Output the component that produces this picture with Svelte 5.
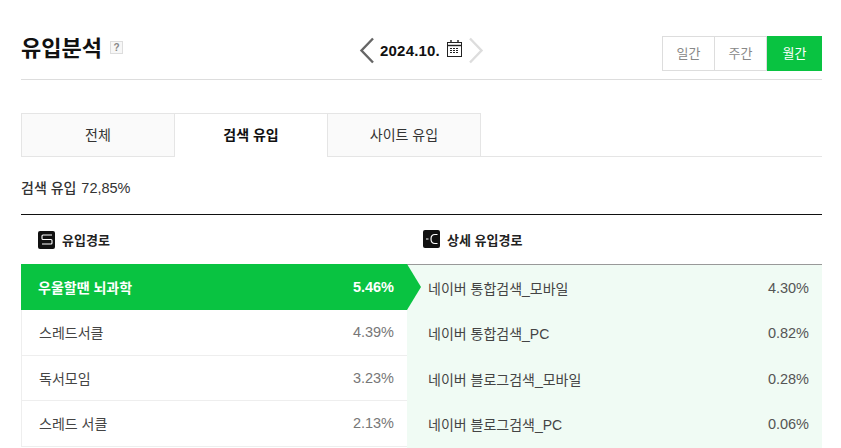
<script>
  const tabs = [
    { label: "전체" },
    { label: "검색 유입", active: true },
    { label: "사이트 유입" }
  ];
  const periods = [
    { label: "일간" },
    { label: "주간" },
    { label: "월간", active: true }
  ];
  const sources = [
    { name: "우울할땐 뇌과학", value: "5.46%", active: true },
    { name: "스레드서클", value: "4.39%" },
    { name: "독서모임", value: "3.23%" },
    { name: "스레드 서클", value: "2.13%" }
  ];
  const details = [
    { name: "네이버 통합검색_모바일", value: "4.30%" },
    { name: "네이버 통합검색_PC", value: "0.82%" },
    { name: "네이버 블로그검색_모바일", value: "0.28%" },
    { name: "네이버 블로그검색_PC", value: "0.06%" }
  ];
</script>

<div class="page">
  <header class="top">
    <div class="title">
      <h1>유입분석</h1>
      <span class="help">?</span>
    </div>
    <div class="date">
      <svg width="16" height="27" viewBox="0 0 16 27">
        <path d="M14 1.500 2.500 13.500 14 25.500" fill="none" stroke="#666" stroke-width="2.400" />
      </svg>
      <strong>2024.10.</strong>
      <svg class="cal" width="15" height="17" viewBox="0 0 15 17">
        <path d="M4 0v3M11 0v3" stroke="#222" stroke-width="1.400" />
        <rect x="0.500" y="2.500" width="14" height="14" fill="none" stroke="#222" />
        <path d="M1 5.500h13" stroke="#222" stroke-width="1.400" />
        <path d="M3 8.500h9M3 10.500h9M3 12.500h9" stroke="#222" stroke-width="1.200" stroke-dasharray="2 1" />
      </svg>
      <svg width="16" height="27" viewBox="0 0 16 27">
        <path d="M2 1.500 13.500 13.500 2 25.500" fill="none" stroke="#ddd" stroke-width="2.400" />
      </svg>
    </div>
    <div class="periods">
      {#each periods as p}
        <span class="period" class:on={p.active}>{p.label}</span>
      {/each}
    </div>
  </header>

  <nav class="tabs">
    {#each tabs as t}
      <span class="tab" class:on={t.active}>{t.label}</span>
    {/each}
  </nav>

  <p class="summary">검색 유입 <span>72,85%</span></p>

  <section class="table">
    <div class="col left">
      <div class="head">
        <span class="badge">
          <svg width="12" height="11" viewBox="0 0 12 11">
            <path d="M11 1H2Q1 1 1 2V4.500Q1 5.500 2 5.500H10Q11 5.500 11 6.500V9Q11 10 10 10H1" fill="none" stroke="#fff" stroke-width="1.100" />
          </svg>
        </span>
        유입경로
      </div>
      {#each sources as s}
        <div class="row" class:on={s.active}>
          <span>{s.name}</span>
          <span class="val">{s.value}</span>
        </div>
      {/each}
    </div>
    <div class="col right">
      <div class="head">
        <span class="badge">
          <svg width="14" height="12" viewBox="0 0 14 12">
            <path d="M12.500 1.500H10Q6 1.500 6 6T10 10.500H12.500M1 6H3.500" fill="none" stroke="#fff" stroke-width="1.200" />
          </svg>
        </span>
        상세 유입경로
      </div>
      <div class="panel">
        {#each details as d}
          <div class="row">
            <span>{d.name}</span>
            <span class="val">{d.value}</span>
          </div>
        {/each}
      </div>
    </div>
  </section>
</div>

<style>
  :global(body) {
    background: #fff;
    overflow: hidden;
  }
  .page, .page * {
    box-sizing: border-box;
  }
  .page {
    width: 801px;
    height: 448px;
    margin-left: 21px;
    overflow: hidden;
    font-family: "Liberation Sans", "Noto Sans CJK KR", sans-serif;
    color: #333;
  }
  .top {
    height: 80px;
    border-bottom: 1px solid #ddd;
    display: grid;
    grid-template-columns: 1fr auto 1fr;
    align-items: start;
  }
  .title {
    display: flex;
    align-items: center;
    gap: 8px;
    padding-top: 33px;
  }
  h1 {
    margin: 0;
    font-size: 22px;
    line-height: 32px;
    font-weight: 700;
    color: #111;
  }
  .help {
    width: 13px;
    height: 13px;
    border: 1px solid #ddd;
    background: #f7f7f7;
    color: #888;
    font-size: 10px;
    font-weight: 700;
    line-height: 11px;
    text-align: center;
    margin-bottom: 3px;
  }
  .date {
    display: flex;
    align-items: center;
    padding-top: 37px;
  }
  .date strong {
    font-size: 15px;
    letter-spacing: 0.2px;
    line-height: 27px;
    color: #111;
    margin: 0 7px 0 5px;
  }
  .cal {
    margin: 0 6px 4px 0;
  }
  .periods {
    display: flex;
    justify-content: flex-end;
    padding-top: 36px;
  }
  .period {
    width: 52px;
    height: 35px;
    border: 1px solid #ddd;
    border-left: 0;
    text-align: center;
    font-size: 13px;
    line-height: 33px;
    color: #888;
  }
  .period:first-child {
    width: 53px;
    border-left: 1px solid #ddd;
  }
  .period.on {
    width: 55px;
    border: 0;
    background: #09c341;
    color: #fff;
    line-height: 35px;
  }
  .tabs {
    display: flex;
    margin-top: 33px;
    height: 44px;
    border-bottom: 1px solid #e5e5e5;
  }
  .tab {
    width: 153px;
    height: 44px;
    border: 1px solid #e5e5e5;
    border-left: 0;
    background: #fafafa;
    text-align: center;
    font-size: 14px;
    line-height: 42px;
    color: #333;
  }
  .tab:first-child {
    width: 154px;
    border-left: 1px solid #e5e5e5;
  }
  .tab.on {
    border-bottom: 0;
    background: #fff;
    font-weight: 700;
    color: #111;
  }
  .summary {
    margin: 21px 0 0;
    font-size: 14px;
    font-weight: 500;
    line-height: 20px;
    color: #333;
  }
  .summary span {
    font-size: 14.500px;
    margin-left: 1px;
  }
  .table {
    margin-top: 16px;
    border-top: 1px solid #111;
    display: flex;
  }
  .col.left {
    width: 386px;
  }
  .col.right {
    width: 415px;
  }
  .head {
    height: 49px;
    display: flex;
    align-items: center;
    gap: 7px;
    font-size: 13px;
    font-weight: 700;
    color: #222;
  }
  .left .head {
    padding-left: 17px;
  }
  .right .head {
    height: 50px;
    padding: 0 0 1px 16px;
    border-bottom: 1px solid #999;
  }
  .badge {
    width: 17px;
    height: 18px;
    border-radius: 2px;
    background: #111;
    display: flex;
    align-items: center;
    justify-content: center;
  }
  .row {
    height: 45.500px;
    display: flex;
    align-items: center;
    justify-content: space-between;
    font-size: 14px;
    color: #444;
  }
  .val {
    font-size: 14.500px;
  }
  .left .row {
    padding: 0 13px 0 17px;
    border-left: 1px solid #eee;
    border-bottom: 1px solid #eee;
  }
  .left .val {
    color: #777;
  }
  .left .row.on {
    position: relative;
    height: 46px;
    border: 0;
    background: #09c341;
    color: #fff;
    font-weight: 700;
    padding-left: 17px;
  }
  .left .row.on .val {
    color: #fff;
  }
  .left .row.on::after {
    content: "";
    position: absolute;
    left: 386px;
    top: 0;
    border-left: 14px solid #09c341;
    border-top: 23px solid transparent;
    border-bottom: 23px solid transparent;
  }
  .panel {
    background: #f0fbf4;
    height: 200px;
  }
  .right .row {
    padding: 0 13px 0 21px;
  }
  .right .val {
    color: #555;
  }
</style>
